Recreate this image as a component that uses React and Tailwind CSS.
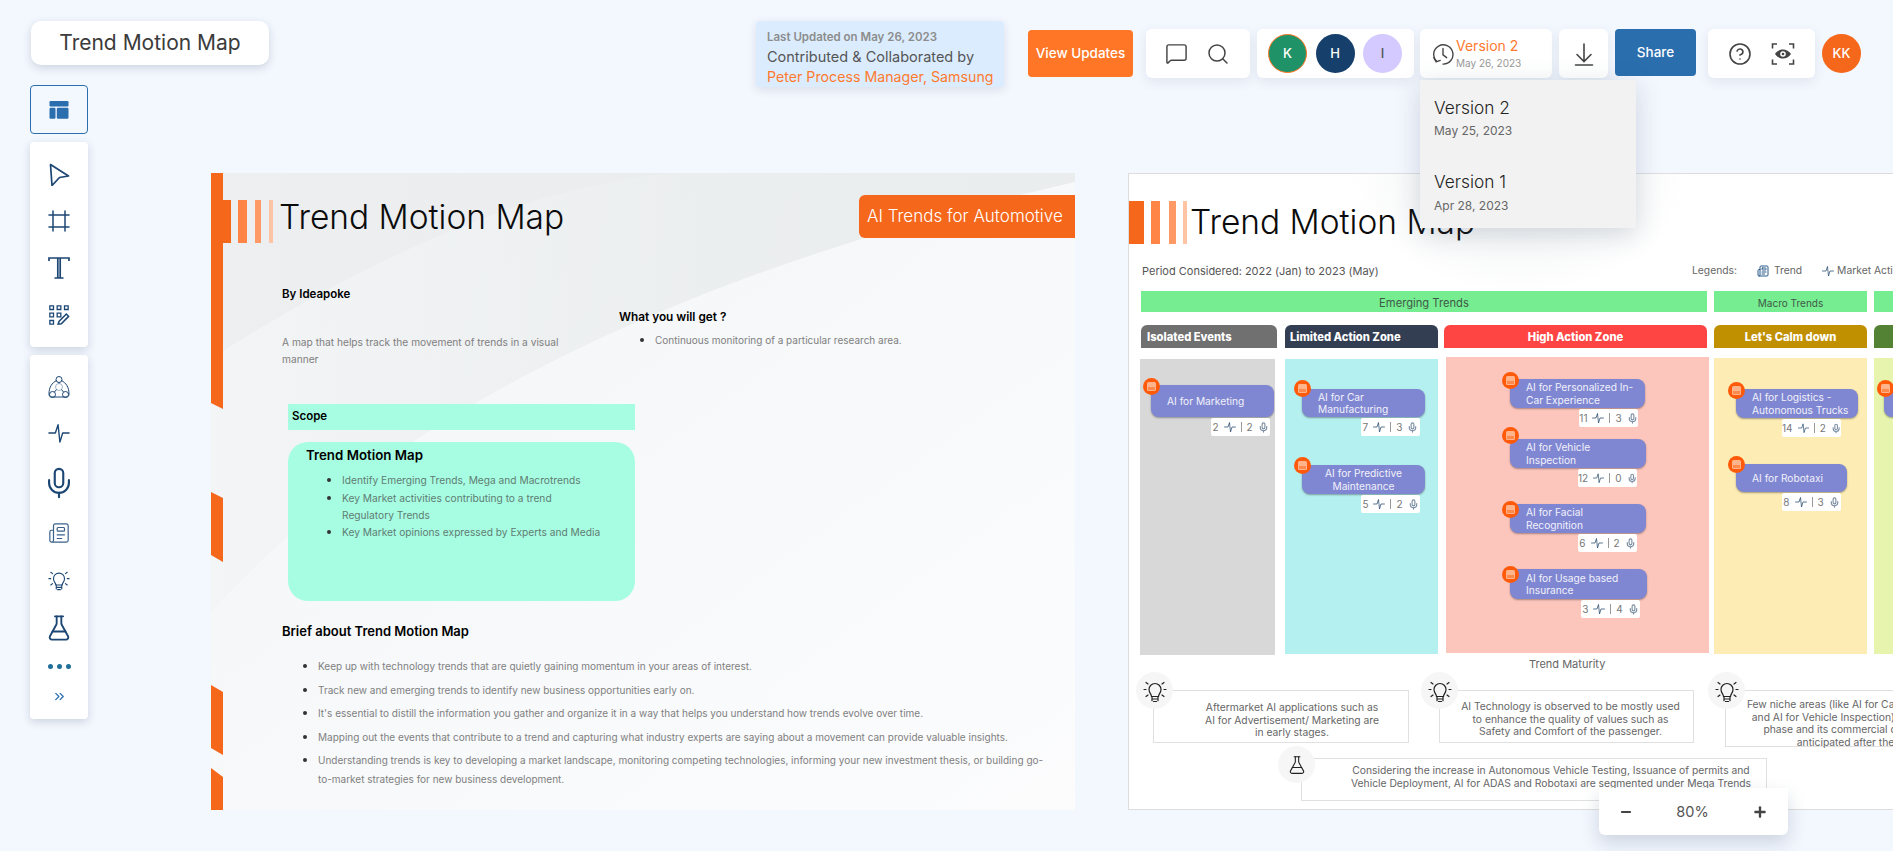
import React from 'react';
import { CircleHelp, ChevronsRight, Frame, Mic, Minus, Newspaper, Plus, Search, MessageSquare, FlaskConical } from 'lucide-react';

const navy = '#1c4673';

function Bulb({ className = '' }) {
  return (
    <svg viewBox="0 0 24 24" fill="none" stroke="currentColor" strokeWidth="1.2" strokeLinecap="round" className={className}>
      <path d="M8.5 17.5c0-2.5-2.5-3.5-2.5-7a6 6 0 0 1 12 0c0 3.500-2.500 4.500-2.500 7z" />
      <path d="M9 20h6M10.500 22.500h3M9 17.500v4.200M15 17.500v4.200" />
      <path d="M1 10.500h2M21 10.500h2M3 3.500l2 1.500M21 3.500l-2 1.500M3 17.500l2-1.500M21 17.500l-2-1.500" />
    </svg>
  );
}

function Pulse({ className = '' }) {
  return (
    <svg viewBox="0 0 24 24" fill="none" stroke="currentColor" strokeWidth="1.5" strokeLinejoin="round" strokeLinecap="round" className={className}>
      <path d="M1 12h7l3-9 2 19 3-10h7" />
    </svg>
  );
}

function ToolPointer() {
  return (
    <svg viewBox="0 0 24 24" fill="none" stroke={navy} strokeWidth="1.7" strokeLinejoin="round" className="size-[24px]">
      <path d="M3.500 2.500 21.500 14 12.500 15.500 5 23.500z" />
    </svg>
  );
}

function ToolText() {
  return (
    <svg viewBox="0 0 24 24" fill="none" stroke={navy} strokeWidth="1.7" className="size-[24px]">
      <path d="M2 5V2h20v3M10.800 2.500v19M13.200 2.500v19M7.500 22h9" />
    </svg>
  );
}

function ToolQrEdit() {
  return (
    <svg viewBox="0 0 24 24" fill="none" stroke={navy} strokeWidth="1.4" className="mt-px size-[22px]">
      <path d="M2 2h4v4H2zM10 2h4v4h-4zM18 2h4v4h-4zM2 10h4v4H2zM10 10h4v4h-4zM2 18h4v4H2z" />
      <path d="M11 22l1-3 8-8 2.500 2.500-8 8z" strokeWidth="1.600" />
    </svg>
  );
}

function ToolCar() {
  return (
    <svg viewBox="0 0 24 24" fill="none" stroke={navy} strokeWidth="1" className="size-[24px]">
      <circle cx="12" cy="4.500" r="3" />
      <circle cx="12" cy="12" r="3.500" stroke="#9fb4ca" />
      <circle cx="5.500" cy="19.500" r="3" />
      <circle cx="18.500" cy="19.500" r="3" />
      <path d="M9.500 5.500C5 8 2 12 2 19c0 2 1 3 3 3h14c2 0 3-1 3-3 0-7-3-11-7.500-13.500" />
      <path d="M12 7.500v1M9.500 14.500l-2 2.500M14.500 14.500l2 2.500" />
    </svg>
  );
}

function IconLayout() {
  return (
    <svg viewBox="0 0 20 20" fill="#2a6eae" className="size-[20px]">
      <rect x="0.500" y="1" width="19" height="5.500" rx="1.200" />
      <rect x="0.500" y="7.800" width="6" height="11" rx="1.200" />
      <rect x="7.800" y="7.800" width="11.700" height="11" rx="1.200" />
    </svg>
  );
}

function IconHistory() {
  return (
    <svg viewBox="0 0 24 24" fill="none" stroke="#444" strokeWidth="1.500" strokeLinecap="round" strokeLinejoin="round" className="size-[22px] shrink-0">
      <path d="M5 20A10.500 10.500 0 1 1 12 23" />
      <path d="M2 16l2.500 4.500L9 19" />
      <path d="M12 6v7l4 3" />
    </svg>
  );
}

function IconDownload() {
  return (
    <svg viewBox="0 0 24 24" fill="none" stroke="#444" strokeWidth="1.600" strokeLinecap="round" className="size-[24px]">
      <path d="M12 2v17M5 12.500l7 7 7-7M3.500 23h17" />
    </svg>
  );
}

function IconEyeScan() {
  return (
    <svg viewBox="0 0 24 24" fill="none" stroke="#444" strokeWidth="1.600" className="size-[24px]">
      <path d="M1.500 6.500V2h4.500M18 2h4.500v4.500M22.500 17.500V22H18M6 22H1.500v-4.500" />
      <path d="M4 12c4-6 12-6 16 0-4 6-12 6-16 0z" fill="#444" stroke="none" />
      <circle cx="12" cy="12" r="2.800" fill="#fff" stroke="none" />
      <circle cx="12" cy="12" r="1.300" fill="#444" stroke="none" />
    </svg>
  );
}

function Stats({ a, b, cls }) {
  return (
    <div className={`flex h-[18px] w-[59px] items-center justify-center gap-[5px] rounded-[2px] bg-white text-[10px] text-[#777] ${cls}`}>
      <span>{a}</span>
      <Pulse className="size-[12px] text-[#26496e]" />
      <span className="h-[10px] w-px bg-[#999]" />
      <span>{b}</span>
      <Mic className="size-[11px] text-[#7c8ea3]" strokeWidth={2.500} />
    </div>
  );
}

function Dot({ cls }) {
  return (
    <div className={`absolute flex size-[17px] items-center justify-center rounded-full bg-[#ff5a0a] ${cls}`}>
      <div className="flex h-[9px] w-[9px] flex-col justify-end rounded-[1.500px] bg-[#ffb48c] p-px">
        <div className="h-[3px] bg-[#ff8a4d]" />
      </div>
    </div>
  );
}

// cards sit in a column by margin, the orange dot hangs over the card corner
function TrendCard({ lines, a, b, wrap, card, dot, stat, center }) {
  return (
    <div className={`relative ${wrap}`}>
      <Dot cls={dot} />
      <div className={`flex flex-col justify-center overflow-hidden rounded-[8px] bg-[#8087d2] text-[10.200px] leading-[12.500px] text-[#f1f1fb] shadow-[0_1px_2px_rgba(0,0,0,0.35)] ${center ? 'items-center text-center' : 'pl-[16px]'} ${card}`}>
        {lines.map((l) => <span key={l} className="whitespace-nowrap">{l}</span>)}
      </div>
      {a !== undefined && <Stats a={a} b={b} cls={stat} />}
    </div>
  );
}

function Note({ wrap, box, children, icon }) {
  return (
    <div className={`relative shrink-0 ${wrap}`}>
      <div className="absolute left-0 top-0 flex size-[37px] items-center justify-center rounded-full bg-[#f6f6f6] text-[#222]">
        {icon === 'flask'
          ? <FlaskConical className="size-[20px]" strokeWidth={1.300} />
          : <Bulb className="size-[24px]" />}
      </div>
      <div className={`whitespace-nowrap border-[1.500px] border-[#e0e0e0] bg-white text-center text-[10.300px] leading-[12.600px] text-[#666] ${box}`}>
        {children}
      </div>
    </div>
  );
}

function SlideOneBackdrop() {
  return (
    <svg viewBox="0 0 864 637" preserveAspectRatio="none" className="absolute inset-0 h-full w-full">
      <defs>
        <linearGradient id="base" x1="0" y1="0" x2="1" y2="1">
          <stop offset="0" stopColor="#f2f4f5" />
          <stop offset="0.550" stopColor="#f7f9fb" />
          <stop offset="1" stopColor="#fcfcfd" />
        </linearGradient>
        <linearGradient id="topShade" x1="0" y1="0" x2="1" y2="0">
          <stop offset="0" stopColor="#f2f4f5" />
          <stop offset="0.600" stopColor="#e8ebec" />
          <stop offset="1" stopColor="#e6e9ea" />
        </linearGradient>
      </defs>
      <rect width="864" height="637" fill="url(#base)" />
      <path d="M0 440C150 270 420 110 864 9V0H0z" fill="url(#topShade)" opacity="0.750" />
      <path d="M0 185C120 110 280 20 456 0H0z" fill="#e9ebec" opacity="0.600" />
      <path d="M0 0H12V236L0 230zM0 319L12 325V389L0 382zM0 512L12 519V582L0 575zM0 595L12 604V637H0z" fill="#f5671b" />
      <rect x="0" y="27" width="20" height="43" fill="#f5671b" />
      <rect x="27" y="27" width="9" height="43" fill="#ff8547" />
      <rect x="44" y="27" width="6" height="43" fill="#ff9a66" />
      <rect x="58" y="27" width="4" height="43" fill="#ffc4a3" />
    </svg>
  );
}

function SlideOne() {
  return (
    <section className="relative h-[637px] w-[864px] shrink-0 overflow-hidden">
      <SlideOneBackdrop />
      <div className="relative">
        <div className="mt-[22px] flex h-[43px] items-center pl-[68px]">
          <h2 className="pt-[3px] text-[33.500px] font-light leading-none text-[#0b0b0b]">Trend Motion Map</h2>
          <div className="ml-auto flex h-[43px] w-[216px] items-center whitespace-nowrap rounded-l-[6px] bg-[#f5671b] pl-[8px] text-[17px] font-light text-white">
            AI Trends for Automotive
          </div>
        </div>

        <div className="mt-[48px] flex pl-[71px]">
          <div className="w-[337px]">
            <p className="text-[11.500px] font-semibold leading-[16px] text-black">By Ideapoke</p>
            <p className="mt-[32px] w-[285px] text-[10.200px] leading-[17px] text-[#808080]">
              A map that helps track the movement of trends in a visual manner
            </p>
          </div>
          <div className="pt-[23px]">
            <p className="text-[11.800px] font-semibold leading-[16px] text-black">What you will get ?</p>
            <ul className="mt-[6px] list-disc pl-[36px] text-[10px] leading-[16px] text-[#808080] marker:text-[#333] marker:text-[13px]">
              <li>Continuous monitoring of a particular research area.</li>
            </ul>
          </div>
        </div>

        <div className="ml-[77px] mt-[36px] flex h-[26px] w-[347px] items-center bg-[#a7fde2] pl-[4px] text-[11.500px] font-semibold text-black">
          Scope
        </div>
        <div className="ml-[77px] mt-[12px] h-[159px] w-[347px] rounded-[20px] bg-[#a7fde2] pl-[18px] pt-[4px]">
          <p className="text-[13.300px] font-semibold leading-[18px] text-black">Trend Motion Map</p>
          <ul className="mt-[7px] list-disc pl-[36px] text-[10.200px] leading-[16.800px] text-[#5f7c72] marker:text-[#333] marker:text-[13px]">
            <li>Identify Emerging Trends, Mega and Macrotrends</li>
            <li>Key Market activities contributing to a trend<br />Regulatory Trends</li>
            <li>Key Market opinions expressed by Experts and Media</li>
          </ul>
        </div>

        <p className="ml-[71px] mt-[22px] text-[13px] font-semibold leading-[16px] text-black">Brief about Trend Motion Map</p>
        <ul className="ml-[71px] mt-[17px] w-[785px] list-disc pl-[36px] text-[10px] leading-[19px] text-[#808080] marker:text-[#333] marker:text-[13px]">
          <li className="mb-[3.500px]">Keep up with technology trends that are quietly gaining momentum in your areas of interest.</li>
          <li className="mb-[3.500px]">Track new and emerging trends to identify new business opportunities early on.</li>
          <li className="mb-[3.500px]">It's essential to distill the information you gather and organize it in a way that helps you understand how trends evolve over time.</li>
          <li className="mb-[3.500px]">Mapping out the events that contribute to a trend and capturing what industry experts are saying about a movement can provide valuable insights.</li>
          <li>Understanding trends is key to developing a market landscape, monitoring competing technologies, informing your new investment thesis, or building go-<br />to-market strategies for new business development.</li>
        </ul>
      </div>
    </section>
  );
}

function SlideTwo() {
  return (
    <section className="relative h-[637px] w-[864px] shrink-0 overflow-hidden border border-[#dddddd] bg-white">
      <div className="absolute left-[220px] top-0 h-[120px] w-[340px] bg-[radial-gradient(ellipse_at_top,#eceeef,rgba(255,255,255,0)_70%)]" />
      <svg viewBox="0 0 64 43" className="absolute left-0 top-[27px] h-[43px] w-[64px]">
        <rect x="0" y="0" width="15" height="43" fill="#f5671b" />
        <rect x="22" y="0" width="9" height="43" fill="#ff8547" />
        <rect x="40" y="0" width="7" height="43" fill="#ff9a66" />
        <rect x="54" y="0" width="4" height="43" fill="#ffc4a3" />
      </svg>
      <div className="relative">
        <h2 className="ml-[61px] mt-[26px] h-[43px] text-[33.500px] font-light leading-[45px] text-[#0b0b0b]">Trend Motion Map</h2>

        <div className="mt-[20px] flex h-[16px] items-center whitespace-nowrap pl-[13px] text-[10.300px] text-[#666]">
          <span className="w-[550px] text-[11px] text-[#555]">Period Considered: 2022 (Jan) to 2023 (May)</span>
          <span>Legends:</span>
          <Newspaper className="ml-[20px] size-[12px] text-[#2b5a8a]" strokeWidth={2} />
          <span className="ml-[5px]">Trend</span>
          <Pulse className="ml-[20px] size-[12px] text-[#26496e]" />
          <span className="ml-[3px]">Market Activity</span>
        </div>

        <div className="ml-[12px] mt-[12px] flex gap-[7px] text-center text-[11.200px] leading-[25px] text-[#3f5a47]">
          <div className="h-[21px] w-[566px] shrink-0 bg-[#75ed90]">Emerging Trends</div>
          <div className="h-[21px] w-[153px] shrink-0 bg-[#75ed90] text-[10px]">Macro Trends</div>
          <div className="h-[21px] w-[100px] shrink-0 bg-[#75ed90]" />
        </div>

        <div className="ml-[12px] mt-[13px] flex text-[11.200px] font-extrabold leading-[25px] text-white">
          <div className="h-[23px] w-[136px] shrink-0 rounded-t-[6px] bg-[#707070] pl-[6px]">Isolated Events</div>
          <div className="ml-[8px] h-[23px] w-[153px] shrink-0 rounded-t-[6px] bg-[#343e52] pl-[5px]">Limited Action Zone</div>
          <div className="ml-[6px] h-[23px] w-[263px] shrink-0 rounded-t-[6px] bg-[#ff4444] text-center">High Action Zone</div>
          <div className="ml-[7px] h-[23px] w-[153px] shrink-0 rounded-t-[6px] bg-[#c09000] text-center">Let's Calm down</div>
          <div className="ml-[7px] h-[23px] w-[100px] shrink-0 rounded-t-[6px] bg-[#548235]" />
        </div>

        <div className="ml-[11px] mt-[9px] flex h-[298px] items-start">
          <div className="mt-[2px] h-[296px] w-[135px] shrink-0 bg-[#d8d8d8] pt-[26px]">
            <TrendCard lines={['AI for Marketing']} a={2} b={2} wrap="ml-[11px]" card="h-[32px] w-[123px]" dot="-left-[8px] -top-[7px]" stat="ml-[60px] mt-px" />
          </div>
          <div className="ml-[10px] mt-[2px] h-[295px] w-[153px] shrink-0 bg-[#b5f0f0] pt-[30px]">
            <TrendCard lines={['AI for Car', 'Manufacturing']} a={7} b={3} wrap="ml-[17px]" card="h-[28px] w-[123px]" dot="-left-[8px] -top-[9px]" stat="ml-[59px] mt-px" />
            <TrendCard center lines={['AI for Predictive', 'Maintenance']} a={5} b={2} wrap="ml-[17px] mt-[29px]" card="h-[29px] w-[123px]" dot="-left-[8px] -top-[8px]" stat="ml-[59px] mt-px" />
          </div>
          <div className="ml-[8px] h-[296px] w-[263px] shrink-0 bg-[#fcc6bd] pt-[22px]">
            <TrendCard lines={['AI for Personalized In-', 'Car Experience']} a={11} b={3} wrap="ml-[64px]" card="h-[29px] w-[135px]" dot="-left-[8px] -top-[7px]" stat="ml-[69px] mt-px" />
            <TrendCard lines={['AI for Vehicle', 'Inspection']} a={12} b={0} wrap="ml-[64px] mt-[12px]" card="h-[29px] w-[136px]" dot="-left-[8px] -top-[12px]" stat="ml-[68px] mt-px" />
            <TrendCard lines={['AI for Facial', 'Recognition']} a={6} b={2} wrap="ml-[64px] mt-[17px]" card="h-[29px] w-[136px]" dot="-left-[8px] -top-[3px]" stat="ml-[68px] mt-px" />
            <TrendCard lines={['AI for Usage based', 'Insurance']} a={3} b={4} wrap="ml-[64px] mt-[17px]" card="h-[30px] w-[137px]" dot="-left-[8px] -top-[3px]" stat="ml-[71px] mt-px" />
          </div>
          <div className="ml-[5px] mt-px h-[296px] w-[153px] shrink-0 bg-[#fdedb5] pt-[31px]">
            <TrendCard lines={['AI for Logistics -', 'Autonomous Trucks']} a={14} b={2} wrap="ml-[22px]" card="h-[29px] w-[122px]" dot="-left-[8px] -top-[7px]" stat="ml-[46px] mt-px" />
            <TrendCard lines={['AI for Robotaxi']} a={8} b={3} wrap="ml-[22px] mt-[27px]" card="h-[28px] w-[111px]" dot="-left-[8px] -top-[8px]" stat="ml-[46px] mt-px" />
          </div>
          <div className="ml-[7px] mt-px h-[296px] w-[100px] shrink-0 bg-[#e6f4ad] pt-[31px]">
            <TrendCard lines={[]} wrap="ml-[10px]" card="h-[28px] w-[90px]" dot="-left-[7px] -top-[9px]" />
          </div>
        </div>

        <p className="ml-[400px] mt-[2px] h-[15px] text-[11px] leading-[15px] text-[#666]">Trend Maturity</p>

        <div className="ml-[7px] flex items-start">
          <Note wrap="w-[273px] pl-[17px] pt-[18px]" box="h-[53px] pl-[22px] pt-[10px]">
            Aftermarket AI applications such as<br />AI for Advertisement/ Marketing are<br />in early stages.
          </Note>
          <Note wrap="ml-[12px] w-[273px] pl-[18px] pt-[18px]" box="h-[53px] pl-[8px] pt-[9px]">
            AI Technology is observed to be mostly used<br />to enhance the quality of values such as<br />Safety and Comfort of the passenger.
          </Note>
          <Note wrap="ml-[14px] w-[289px] pl-[17px] pt-[18px]" box="h-[57px] pt-[7px]">
            Few niche areas (like AI for Car Manufacturing,<br />and AI for Vehicle Inspection) are in the early<br />phase and its commercial deployment is<br />anticipated after the 2025.
          </Note>
        </div>
        <div className="-mt-px ml-[149px] flex">
          <Note icon="flask" wrap="w-[489px] pl-[23px] pt-[12px]" box="h-[43px] pl-[34px] pt-[5px]">
            Considering the increase in Autonomous Vehicle Testing, Issuance of permits and<br />Vehicle Deployment, AI for ADAS and Robotaxi are segmented under Mega Trends
          </Note>
        </div>
      </div>
    </section>
  );
}

function ToolBar() {
  return (
    <aside className="ml-[30px] flex w-[58px] shrink-0 flex-col gap-[8px]">
      <button className="flex h-[49px] items-center justify-center rounded-[4px] border border-[#2a6eae]"><IconLayout /></button>
      <div className="flex h-[205px] flex-col items-center gap-[23px] rounded-[4px] bg-white pt-[20px] shadow-[0_3px_8px_rgba(70,90,120,0.22)]">
        <ToolPointer />
        <Frame className="size-[24px]" color={navy} strokeWidth={1.500} />
        <ToolText />
        <ToolQrEdit />
      </div>
      <div className="flex h-[364px] flex-col items-center rounded-[4px] bg-white pt-[20px] shadow-[0_3px_8px_rgba(70,90,120,0.22)]">
        <ToolCar />
        <Pulse className="mt-[23px] size-[22px] text-[#1c4673]" />
        <Mic className="mt-[22px] size-[34px]" color={navy} strokeWidth={1.500} />
        <Newspaper className="mt-[22px] size-[22px]" color="#38608a" strokeWidth={1.300} />
        <Bulb className="mt-[25px] size-[22px] text-[#1c4673]" />
        <FlaskConical className="mt-[23px] size-[28px]" color={navy} strokeWidth={1.600} />
        <div className="mt-[22px] flex gap-[4px]">
          <span className="size-[5px] rounded-full bg-[#1f6f99]" />
          <span className="size-[5px] rounded-full bg-[#1f6f99]" />
          <span className="size-[5px] rounded-full bg-[#1f6f99]" />
        </div>
        <ChevronsRight className="mt-[20px] size-[15px]" color="#2a6eae" strokeWidth={2} />
      </div>
    </aside>
  );
}

function Avatar({ label, cls }) {
  return (
    <div className={`flex size-[39px] shrink-0 items-center justify-center rounded-full text-[13px] font-medium ${cls}`}>{label}</div>
  );
}

function TopBar() {
  const panel = 'flex h-[49px] shrink-0 items-center rounded-[6px] bg-white shadow-[0_4px_12px_rgba(70,90,120,0.10)]';
  return (
    <header className="flex h-[85px] shrink-0 items-start pt-[21px]">
      <div className="ml-[31px] flex h-[44px] w-[238px] shrink-0 items-center justify-center rounded-[10px] bg-white text-[21px] text-[#3b3b3b] shadow-[0_3px_8px_rgba(70,90,120,0.22)]">
        Trend Motion Map
      </div>

      <div className="ml-[487px] h-[66px] w-[248px] shrink-0 rounded-[4px] bg-[#dbecff] pl-[11px] pt-[8px] shadow-[0_3px_10px_rgba(70,90,120,0.15)]">
        <p className="whitespace-nowrap text-[11.500px] font-semibold leading-[16px] text-[#8c8c8c]">Last Updated on May 26, 2023</p>
        <p className="mt-[2px] whitespace-nowrap text-[14.500px] leading-[20px] text-[#555]">Contributed &amp; Collaborated by</p>
        <p className="whitespace-nowrap text-[14.200px] leading-[20px] text-[#ff7a2e]">Peter Process Manager, Samsung</p>
      </div>

      <div className="ml-[24px] mt-[9px] flex h-[47px] w-[105px] shrink-0 items-center justify-center rounded-[4px] bg-[#ff7726] text-[13.500px] font-medium text-white">
        View Updates
      </div>

      <div className={`${panel} ml-[13px] mt-[8px] w-[104px] pl-[19px]`}>
        <MessageSquare className="size-[23px]" color="#444" strokeWidth={1.500} />
        <Search className="ml-[18px] size-[24px]" color="#444" strokeWidth={1.500} />
      </div>

      <div className={`${panel} ml-[7px] mt-[8px] w-[157px] gap-[8.500px] pl-[11px]`}>
        <Avatar label="K" cls="border border-[#ff7726] bg-[#1f9268] text-white" />
        <Avatar label="H" cls="bg-[#163f6b] text-white" />
        <Avatar label="I" cls="bg-[#d4caff] text-[#555]" />
      </div>

      <div className={`${panel} ml-[6px] mt-[8px] w-[132px] pl-[12px]`}>
        <IconHistory />
        <div className="ml-[2px] whitespace-nowrap">
          <p className="text-[14px] leading-[18px] text-[#ff7a2e]">Version 2</p>
          <p className="text-[10px] leading-[16px] text-[#999]">May 26, 2023</p>
        </div>
      </div>

      <div className={`${panel} ml-[7px] mt-[8px] w-[49px] justify-center`}>
        <IconDownload />
      </div>

      <div className="ml-[7px] mt-[8px] flex h-[47px] w-[81px] shrink-0 items-center justify-center rounded-[4px] bg-[#2a6eae] text-[13.500px] font-medium text-white">
        Share
      </div>

      <div className={`${panel} ml-[12px] mt-[8px] w-[107px] pl-[20px]`}>
        <CircleHelp className="size-[24px]" color="#444" strokeWidth={1.600} />
        <div className="ml-[19px]"><IconEyeScan /></div>
      </div>

      <Avatar label="KK" cls="ml-[7px] mt-[13px] bg-[#f5671b] text-white" />
    </header>
  );
}

export default function App() {
  return (
    <div className="relative flex h-[851px] w-full flex-col overflow-hidden bg-[#f3f7fe] font-[Inter,sans-serif]">
      <TopBar />
      <main className="flex flex-1 items-start">
        <ToolBar />
        <div className="ml-[123px] mt-[88px] flex gap-[53px]">
          <SlideOne />
          <SlideTwo />
        </div>
      </main>

      {/* version dropdown */}
      <div className="absolute left-[1420px] top-[80px] h-[148px] w-[216px] bg-[#f2f2f2] pl-[14px] pt-[18px] shadow-[0_6px_24px_rgba(70,90,120,0.22)]">
        <p className="text-[17.300px] font-light leading-[20px] text-[#222]">Version 2</p>
        <p className="mt-[5px] text-[12px] leading-[16px] text-[#666]">May 25, 2023</p>
        <p className="mt-[33px] text-[17.300px] font-light leading-[20px] text-[#222]">Version 1</p>
        <p className="mt-[6px] text-[12px] leading-[16px] text-[#666]">Apr 28, 2023</p>
      </div>

      {/* zoom control */}
      <div className="absolute left-[1599px] top-[788px] flex h-[47px] w-[189px] items-center justify-between rounded-b-[6px] bg-white px-[20px] text-[14.500px] text-[#555] shadow-[0_8px_18px_rgba(70,90,120,0.22)]">
        <Minus className="size-[14px]" color="#444" strokeWidth={3.500} />
        <span>80%</span>
        <Plus className="size-[16px]" color="#444" strokeWidth={3.500} />
      </div>
    </div>
  );
}
